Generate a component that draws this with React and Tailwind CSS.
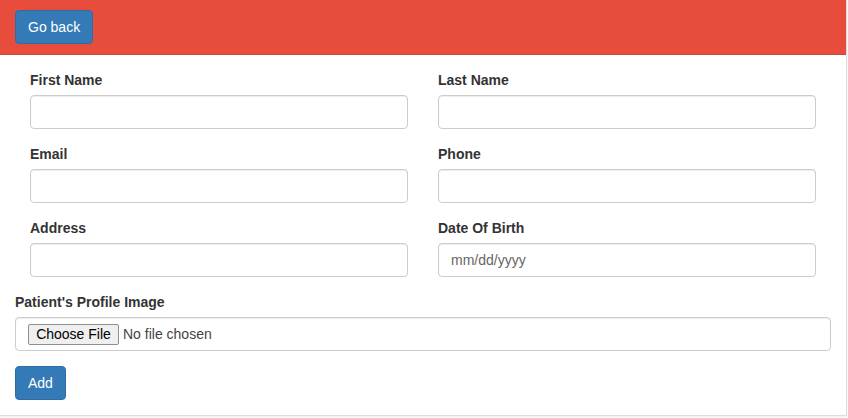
export default function App() {
  const font = { fontFamily: '"Liberation Sans", Arial, Helvetica, sans-serif' };
  const Field = ({ label, placeholder }) => (
    <div className="mb-[15px]">
      <label className="mb-[5px] block text-[14px] font-bold leading-[20px] text-[#333]">{label}</label>
      <input
        type="text"
        placeholder={placeholder}
        className="block h-[34px] w-full rounded-[4px] border border-[#ccc] bg-white px-[12px] py-[6px] text-[14px] text-[#555] shadow-[inset_0_1px_1px_rgba(0,0,0,0.075)] outline-none placeholder:text-[#666]"
      />
    </div>
  );
  return (
    <div className="min-h-[418px] bg-white" style={font}>
      <div className="w-[847px] border-b border-r border-[#ddd] bg-white shadow-[0_1px_2px_rgba(0,0,0,0.08)]">
        <div className="h-[55px] border-b border-[#c9463a] bg-[#e74c3c] p-[10px] px-[15px]">
          <button className="h-[34px] rounded-[4px] border border-[#2e6da4] bg-[#337ab7] px-[12px] text-[14px] leading-[20px] text-white">
            Go back
          </button>
        </div>
        <div className="p-[15px]">
          <div className="grid grid-cols-2">
            <div className="px-[15px]">
              <Field label="First Name" />
            </div>
            <div className="px-[15px]">
              <Field label="Last Name" />
            </div>
            <div className="px-[15px]">
              <Field label="Email" />
            </div>
            <div className="px-[15px]">
              <Field label="Phone" />
            </div>
            <div className="px-[15px]">
              <Field label="Address" />
            </div>
            <div className="px-[15px]">
              <Field label="Date Of Birth" placeholder="mm/dd/yyyy" />
            </div>
          </div>
          <div className="mb-[15px]">
            <label className="mb-[5px] block text-[14px] font-bold leading-[20px] text-[#333]">Patient's Profile Image</label>
            <div className="flex h-[34px] w-full items-center rounded-[4px] border border-[#ccc] bg-white px-[12px] text-[14px] text-[#555] shadow-[inset_0_1px_1px_rgba(0,0,0,0.075)]">
              <span className="flex h-[21px] w-[91px] items-center justify-center rounded-[2px] border border-[#8f8f8f] bg-[#efefef] text-[14px] text-[#000]">
                Choose File
              </span>
              <span className="ml-[4px] text-[#444]">No file chosen</span>
            </div>
          </div>
          <button className="h-[34px] rounded-[4px] border border-[#2e6da4] bg-[#337ab7] px-[12px] text-[14px] leading-[20px] text-white">
            Add
          </button>
        </div>
      </div>
    </div>
  );
}
